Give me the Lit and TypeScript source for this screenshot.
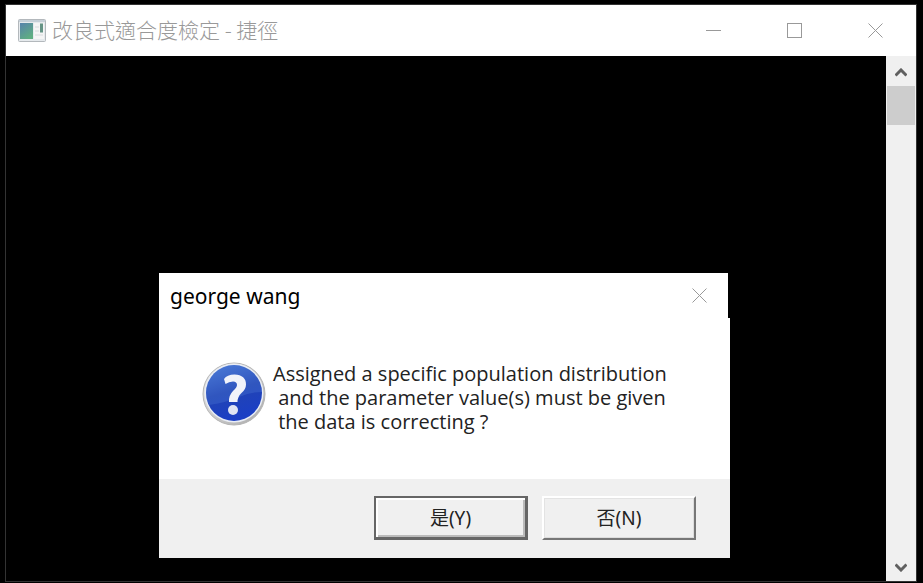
import { LitElement, html, css, svg } from "lit";
import { customElement } from "lit/decorators.js";

const crossIcon = svg`<path d="M0.5 0.5L14.5 14.5M14.5 0.5L0.5 14.5" />`;

@customElement("message-box")
class MessageBox extends LitElement {
  static styles = css`
    :host {
      display: block;
      width: 571px;
      max-width: 100%;
    }
    .title-bar {
      display: flex;
      align-items: center;
      justify-content: space-between;
      height: 45px;
      margin-right: 2px;
      padding-left: 11px;
      background: #fff;
    }
    .title {
      margin: 0;
      font-size: 21px;
      font-weight: 400;
      line-height: 30px;
    }
    .close {
      display: grid;
      place-items: center;
      width: 57px;
      height: 45px;
      padding: 0;
      border: 0;
      background: none;
    }
    .close svg {
      fill: none;
      stroke: #999;
    }
    .body {
      display: flex;
      align-items: flex-start;
      gap: 6px;
      padding: 42px 44px 45px 42px;
      background: #fff;
    }
    .icon {
      flex: none;
    }
    .message {
      margin: 2px 0 0;
      font-family: "Open Sans", "Noto Sans", sans-serif;
      font-size: 20px;
      line-height: 24px;
      white-space: pre;
      color: #222;
    }
    .footer {
      display: flex;
      justify-content: flex-end;
      gap: 14px;
      padding: 17px 34px 18px;
      background: #f0f0f0;
    }
    .button {
      box-sizing: border-box;
      width: 154px;
      height: 44px;
      padding: 0;
      border: 2px solid;
      border-color: #fff #777 #777 #fff;
      box-shadow: inset 1px 1px #e3e3e3, inset -1px -1px #ddd;
      background: #f0f0f0;
      color: #222;
      font: inherit;
      font-size: 19px;
      line-height: 24px;
    }
    .primary {
      border: 1px solid #666;
      border-width: 2px 3px 3px 2px;
      box-shadow: inset 2px 2px #fff, inset -2px -2px #bbb;
    }
  `;

  render() {
    return html`
      <div role="dialog" aria-labelledby="title" aria-describedby="message">
        <header class="title-bar">
          <h2 class="title" id="title">george wang</h2>
          <button class="close" aria-label="Close">
            <svg width="15" height="15" viewBox="0 0 15 15">${crossIcon}</svg>
          </button>
        </header>
        <div class="body">
          <svg class="icon" width="66" height="66" viewBox="0 0 66 66" aria-hidden="true">
            <defs>
              <linearGradient id="rim" x1="0" y1="0" x2="1" y2="1">
                <stop offset="0" stop-color="#eee" />
                <stop offset="1" stop-color="#a9a9a9" />
              </linearGradient>
              <linearGradient id="ball" x1="0" y1="0" x2="0.3" y2="1">
                <stop offset="0" stop-color="#4777d6" />
                <stop offset="0.55" stop-color="#2244b4" />
                <stop offset="1" stop-color="#1b3fc4" />
              </linearGradient>
            </defs>
            <circle cx="33" cy="34" r="31" fill="url(#rim)" stroke="#b5b5b5" />
            <circle cx="33" cy="33" r="29.5" fill="#e9edf5" />
            <circle cx="33" cy="33" r="28" fill="url(#ball)" />
            <path d="M5 34A28 28 0 0 1 61 32Q49 32 38 37T8 45Q5 40 5 34Z" fill="#5d8ae0" opacity="0.25" />
            <path
              d="M23 19Q26 14.500 33.500 14.500Q45 15 45 24.500Q45 29.500 40 33.500Q36.500 37 36.500 42H28Q27.500 35.500 32 31Q36 27.500 36 25Q36 21.500 32 21.500Q28 21.500 24.500 24Z"
              fill="#f1f3fa"
            />
            <circle cx="32" cy="50" r="5" fill="#dfe4f3" />
          </svg>
          <p class="message" id="message">${"Assigned a specific population distribution\n and the parameter value(s) must be given\n the data is correcting ?"}</p>
        </div>
        <footer class="footer">
          <button class="button primary">是(Y)</button>
          <button class="button">否(N)</button>
        </footer>
      </div>
    `;
  }
}

@customElement("app-root")
class AppRoot extends LitElement {
  static styles = css`
    :host {
      display: flex;
      box-sizing: border-box;
      height: 100vh;
      padding: 4px 6px 1px 5px;
      background: #000;
      color: #000;
      font-family: "Noto Sans", "Noto Sans CJK TC", sans-serif;
    }
    .window {
      flex: 1;
      display: flex;
      flex-direction: column;
      min-width: 0;
      border: 1px solid #333;
    }
    .title-bar {
      display: flex;
      align-items: center;
      height: 51px;
      padding-left: 12px;
      background: #fff;
    }
    .title {
      flex: 1;
      margin: 0 0 4px 6px;
      color: #999;
      font-family: "Noto Sans CJK TC", sans-serif;
      font-size: 21px;
      font-weight: 300;
      line-height: 30px;
      white-space: nowrap;
    }
    .control {
      display: grid;
      place-items: center;
      width: 81px;
      height: 51px;
      padding: 0;
      border: 0;
      background: none;
    }
    .control svg {
      fill: none;
      stroke: #999;
    }
    .content {
      flex: 1;
      display: flex;
      min-height: 0;
    }
    .console {
      flex: 1;
      display: flex;
      flex-direction: column;
      align-items: center;
      justify-content: flex-end;
      min-width: 0;
      padding: 0 3px 23px 0;
      background: #000;
    }
    .scrollbar {
      display: flex;
      flex-direction: column;
      width: 30px;
      background: #f0f0f0;
    }
    .arrow {
      display: grid;
      place-items: center;
      height: 30px;
      padding: 2px 0 0;
      border: 0;
      background: none;
    }
    .arrow svg {
      fill: none;
      stroke: #606060;
      stroke-width: 3;
    }
    .track {
      flex: 1;
    }
    .thumb {
      height: 39px;
      margin: 0 1px;
      background: #cdcdcd;
    }
  `;

  render() {
    return html`
      <main class="window">
        <header class="title-bar">
          <svg width="28" height="24" viewBox="0 0 28 24" aria-hidden="true">
            <defs>
              <linearGradient id="pane" x1="0" y1="0" x2="0.6" y2="1">
                <stop offset="0" stop-color="#5782ac" />
                <stop offset="1" stop-color="#5fae82" />
              </linearGradient>
            </defs>
            <rect x="0.5" y="0.5" width="27" height="22" rx="1" fill="#e6eaed" stroke="#b3b8bc" />
            <path d="M1 2H27" stroke="#c6d0d8" stroke-width="2" />
            <rect x="2" y="4" width="13" height="16" fill="url(#pane)" />
            <rect x="16" y="4" width="10" height="16" fill="#f5f5f5" />
            <rect x="22" y="4.500" width="3" height="9" fill="#659486" />
            <path d="M17 8H21M17 12H21M17 16H25" stroke="#d7dadd" />
          </svg>
          <h1 class="title">改良式適合度檢定 - 捷徑</h1>
          <button class="control" aria-label="Minimize">
            <svg width="15" height="15" viewBox="0 0 15 15"><path d="M0 7.500H15" /></svg>
          </button>
          <button class="control" aria-label="Maximize">
            <svg width="15" height="15" viewBox="0 0 15 15"><rect x="0.5" y="0.5" width="14" height="14" /></svg>
          </button>
          <button class="control" aria-label="Close">
            <svg width="15" height="15" viewBox="0 0 15 15">${crossIcon}</svg>
          </button>
        </header>
        <div class="content">
          <section class="console"><message-box></message-box></section>
          <div class="scrollbar">
            <button class="arrow" aria-label="Scroll up">
              <svg width="12" height="9" viewBox="0 0 12 9"><path d="M0.500 7.500L6 2L11.500 7.500" /></svg>
            </button>
            <div class="track"><div class="thumb"></div></div>
            <button class="arrow" aria-label="Scroll down">
              <svg width="12" height="9" viewBox="0 0 12 9"><path d="M0.500 1.500L6 7L11.500 1.500" /></svg>
            </button>
          </div>
        </div>
      </main>
    `;
  }
}
